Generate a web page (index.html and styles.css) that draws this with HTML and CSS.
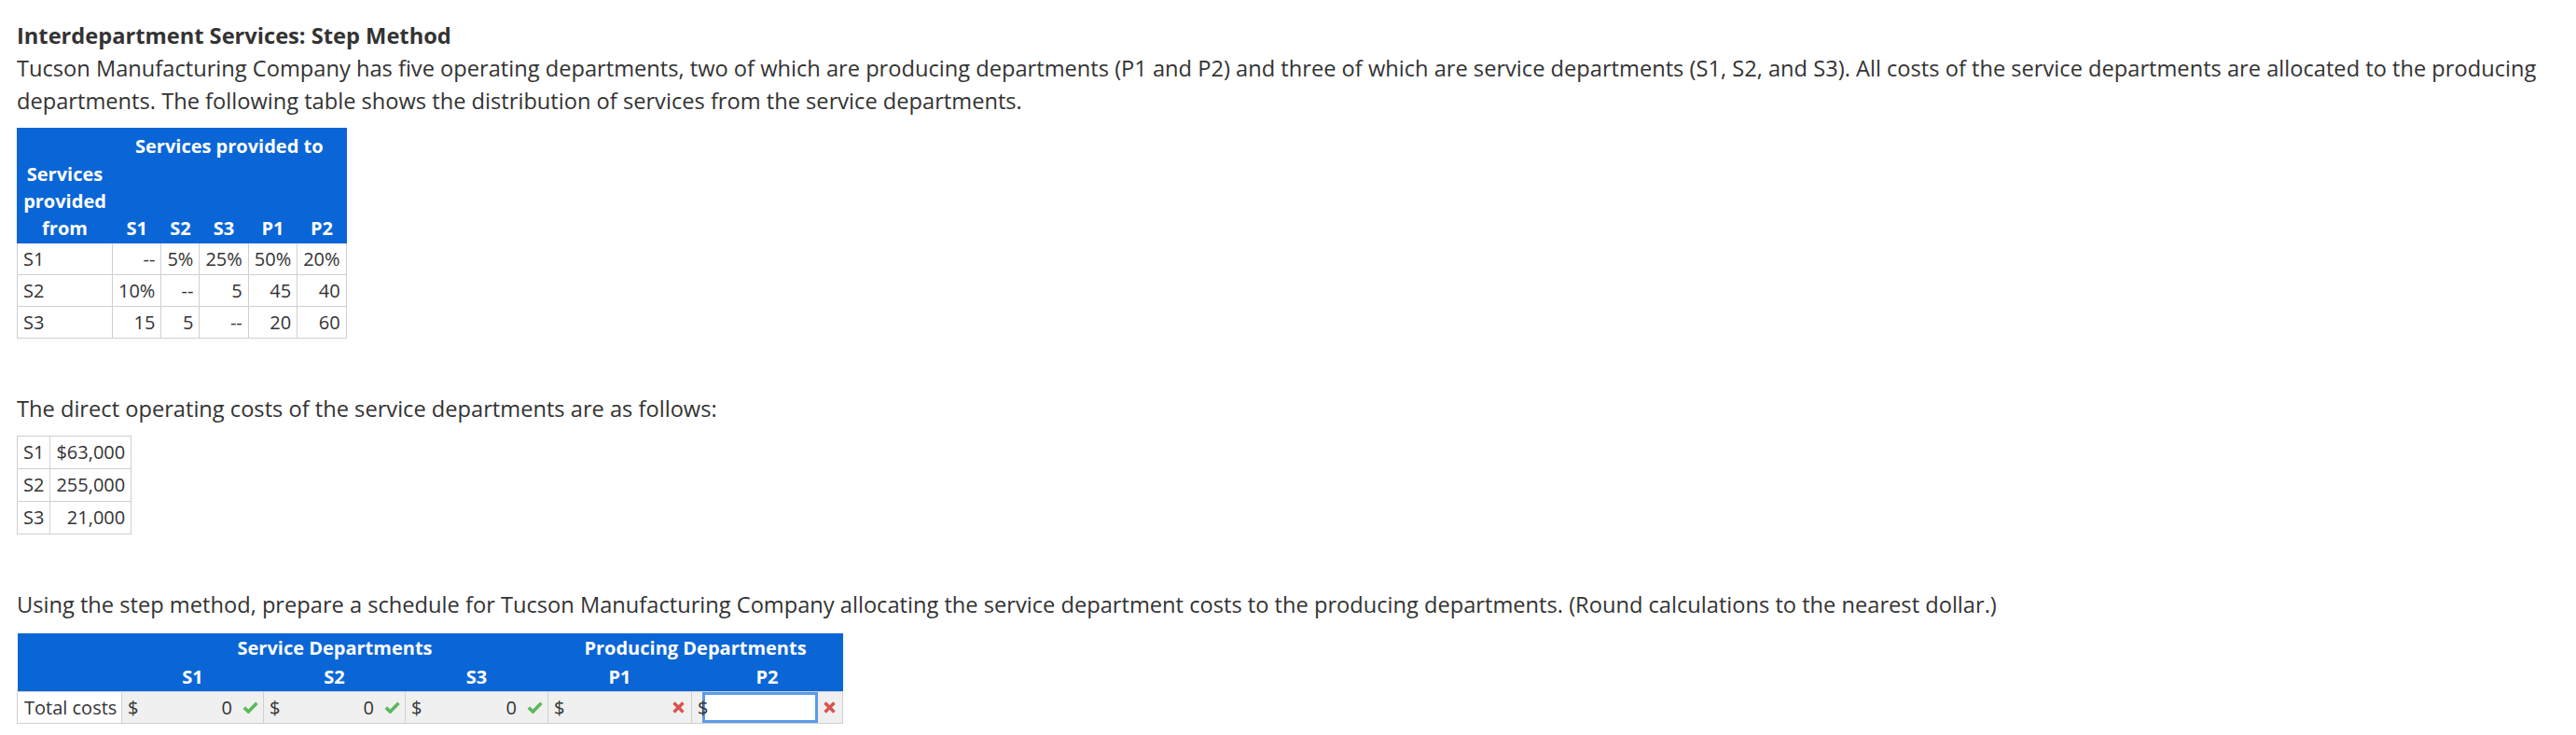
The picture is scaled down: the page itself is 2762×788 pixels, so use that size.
FILE: index.html
```html
<!DOCTYPE html>
<html lang="en">
<head>
<meta charset="utf-8">
<title>Interdepartment Services: Step Method</title>
<link rel="stylesheet" href="styles.css">
</head>
<body>
<div class="page">
  <div class="intro">
    <div class="title">Interdepartment Services: Step Method</div>
    <p class="text">Tucson Manufacturing Company has five operating departments, two of which are producing departments (P1 and P2) and three of which are service departments (S1, S2, and S3). All costs of the service departments are allocated to the producing departments. The following table shows the distribution of services from the service departments.</p>
  </div>

  <table class="grid dist">
    <thead>
      <tr>
        <th rowspan="2" class="from">Services provided from</th>
        <th colspan="5" class="to">Services provided to</th>
      </tr>
      <tr class="cols">
        <th>S1</th><th>S2</th><th>S3</th><th>P1</th><th>P2</th>
      </tr>
    </thead>
    <tbody>
      <tr><td class="lbl">S1</td><td>--</td><td>5%</td><td>25%</td><td>50%</td><td>20%</td></tr>
      <tr><td class="lbl">S2</td><td>10%</td><td>--</td><td>5</td><td>45</td><td>40</td></tr>
      <tr><td class="lbl">S3</td><td>15</td><td>5</td><td>--</td><td>20</td><td>60</td></tr>
    </tbody>
  </table>

  <p class="text gap">The direct operating costs of the service departments are as follows:</p>

  <table class="grid costs">
    <tbody>
      <tr><td class="lbl">S1</td><td>$63,000</td></tr>
      <tr><td class="lbl">S2</td><td>255,000</td></tr>
      <tr><td class="lbl">S3</td><td>21,000</td></tr>
    </tbody>
  </table>

  <p class="text gap">Using the step method, prepare a schedule for Tucson Manufacturing Company allocating the service department costs to the producing departments. (Round calculations to the nearest dollar.)</p>

  <table class="sched">
    <colgroup>
      <col class="w-label"><col class="w-s1"><col class="w-s2"><col class="w-s3"><col class="w-p1"><col class="w-p2">
    </colgroup>
    <thead>
      <tr>
        <th></th>
        <th colspan="3">Service Departments</th>
        <th colspan="2">Producing Departments</th>
      </tr>
      <tr>
        <th></th><th>S1</th><th>S2</th><th>S3</th><th>P1</th><th>P2</th>
      </tr>
    </thead>
    <tbody>
      <tr>
        <td class="lbl">Total costs</td>
        <td class="entry"><div class="box"><span class="cur">$</span><input class="amt" type="text" value="0" readonly><svg class="mark" viewBox="0 0 17 13" width="17" height="13"><polyline points="1.8,6.6 6.4,11 15.4,1.8" fill="none" stroke="#5cb85c" stroke-width="3.6"/></svg></div></td>
        <td class="entry"><div class="box"><span class="cur">$</span><input class="amt" type="text" value="0" readonly><svg class="mark" viewBox="0 0 17 13" width="17" height="13"><polyline points="1.8,6.6 6.4,11 15.4,1.8" fill="none" stroke="#5cb85c" stroke-width="3.6"/></svg></div></td>
        <td class="entry"><div class="box"><span class="cur">$</span><input class="amt" type="text" value="0" readonly><svg class="mark" viewBox="0 0 17 13" width="17" height="13"><polyline points="1.8,6.6 6.4,11 15.4,1.8" fill="none" stroke="#5cb85c" stroke-width="3.6"/></svg></div></td>
        <td class="entry"><div class="box"><span class="cur">$</span><input class="amt" type="text" value="" readonly><svg class="mark" viewBox="0 0 17 13" width="17" height="13"><path d="M3.5 1.5 L13.5 11.5 M13.5 1.5 L3.5 11.5" fill="none" stroke="#d9534f" stroke-width="3.4"/></svg></div></td>
        <td class="entry"><div class="box"><span class="cur">$</span><input class="amt focus" type="text" value="" readonly><svg class="mark" viewBox="0 0 17 13" width="17" height="13"><path d="M3.5 1.5 L13.5 11.5 M13.5 1.5 L3.5 11.5" fill="none" stroke="#d9534f" stroke-width="3.4"/></svg></div></td>
      </tr>
    </tbody>
  </table>
</div>
</body>
</html>
```

FILE: styles.css
```css
html, body {
  margin: 0;
  padding: 0;
  background: #ffffff;
}

body {
  font-family: "Open Sans", "DejaVu Sans", sans-serif;
  color: #333333;
}

.page {
  padding: 21px 18px 0 18px;
}

.title {
  font-size: 23.65px;
  line-height: 35px;
  font-weight: 700;
}

.text {
  margin: 0;
  font-size: 23.65px;
  line-height: 35px;
}

.text.gap {
  margin-top: 58px;
}

/* generic bordered grid tables */
.grid {
  border-collapse: collapse;
  font-size: 20px;
  margin-top: 11px;
}

.grid td {
  border: 1px solid #cfcfcf;
  padding: 2px 6px;
  line-height: 29px;
  text-align: right;
  white-space: nowrap;
}

.grid td.lbl {
  text-align: left;
}

.dist th {
  background: #0a66d6;
  color: #ffffff;
  font-weight: 700;
  border: 1px solid #0a66d6;
  line-height: 29px;
  text-align: center;
}

.dist th.from {
  width: 89px;
  padding: 0 6px 1px;
  vertical-align: bottom;
}

.dist th.to {
  vertical-align: top;
  height: 85px;
  padding: 4px 6px 0;
}

.dist .cols th {
  padding: 2px 6px 1px;
  vertical-align: bottom;
}

.costs td {
  line-height: 30px;
}

/* schedule table */
.sched {
  margin-top: 13px;
  border-collapse: collapse;
  table-layout: fixed;
  width: 885px;
  font-size: 20px;
}

.w-label { width: 112px; }
.w-s1 { width: 152px; }
.w-s2 { width: 152px; }
.w-s3 { width: 153px; }
.w-p1 { width: 154px; }
.w-p2 { width: 162px; }

.sched th {
  background: #0a66d6;
  color: #ffffff;
  font-weight: 700;
  line-height: 29px;
  padding: 1px 0;
  text-align: center;
  border: 0;
}

.sched td {
  border: 1px solid #cfcfcf;
  padding: 0;
  height: 33px;
}

.sched td.lbl {
  background: #ffffff;
  padding: 0 7px;
  white-space: nowrap;
  line-height: 29px;
}

.sched td.entry {
  background: #f0f0f0;
}

.box {
  display: flex;
  align-items: center;
  height: 33px;
  padding: 0 5px 0 6px;
}

.cur {
  position: relative;
  z-index: 1;
  width: 12px;
  flex: none;
}

.amt {
  flex: 1 1 auto;
  min-width: 0;
  height: 33px;
  box-sizing: border-box;
  margin: 0 4px 0 -7px;
  padding: 0 4px 0 4px;
  border: 3px solid transparent;
  background: transparent;
  font-family: "Open Sans", "DejaVu Sans", sans-serif;
  font-size: 20px;
  color: #333333;
  text-align: right;
  outline: none;
}

.amt.focus {
  background: #ffffff;
  border-color: #5b9be8;
}

.mark {
  flex: none;
  display: block;
}
```
